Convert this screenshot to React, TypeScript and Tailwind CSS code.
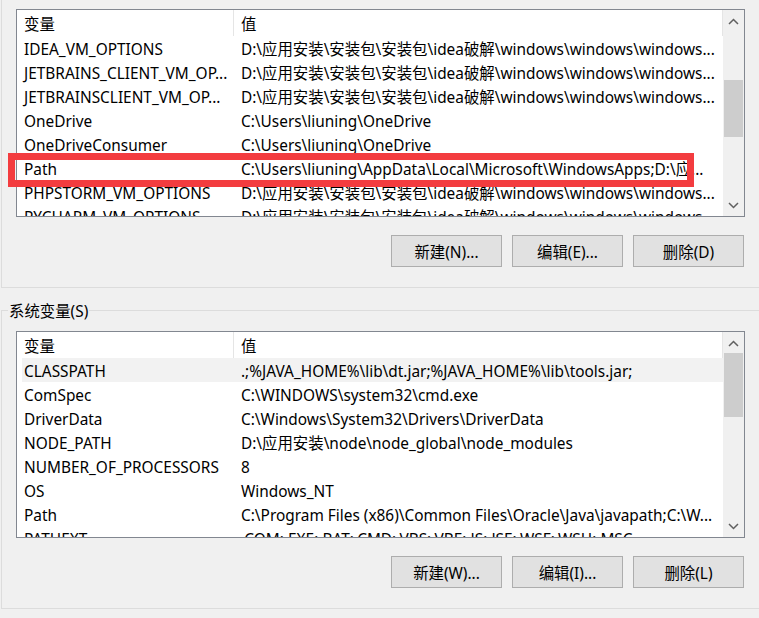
import React from 'react';

type Row = { name: string; value: string };

const userRows: Row[] = [
  { name: 'IDEA_VM_OPTIONS', value: 'D:\\应用安装\\安装包\\安装包\\idea破解\\windows\\windows\\windows...' },
  { name: 'JETBRAINS_CLIENT_VM_OP...', value: 'D:\\应用安装\\安装包\\安装包\\idea破解\\windows\\windows\\windows...' },
  { name: 'JETBRAINSCLIENT_VM_OP...', value: 'D:\\应用安装\\安装包\\安装包\\idea破解\\windows\\windows\\windows...' },
  { name: 'OneDrive', value: 'C:\\Users\\liuning\\OneDrive' },
  { name: 'OneDriveConsumer', value: 'C:\\Users\\liuning\\OneDrive' },
  { name: 'Path', value: 'C:\\Users\\liuning\\AppData\\Local\\Microsoft\\WindowsApps;D:\\应...' },
  { name: 'PHPSTORM_VM_OPTIONS', value: 'D:\\应用安装\\安装包\\安装包\\idea破解\\windows\\windows\\windows...' },
  { name: 'PYCHARM_VM_OPTIONS', value: 'D:\\应用安装\\安装包\\安装包\\idea破解\\windows\\windows\\windows...' },
];

const systemRows: Row[] = [
  { name: 'CLASSPATH', value: '.;%JAVA_HOME%\\lib\\dt.jar;%JAVA_HOME%\\lib\\tools.jar;' },
  { name: 'ComSpec', value: 'C:\\WINDOWS\\system32\\cmd.exe' },
  { name: 'DriverData', value: 'C:\\Windows\\System32\\Drivers\\DriverData' },
  { name: 'NODE_PATH', value: 'D:\\应用安装\\node\\node_global\\node_modules' },
  { name: 'NUMBER_OF_PROCESSORS', value: '8' },
  { name: 'OS', value: 'Windows_NT' },
  { name: 'Path', value: 'C:\\Program Files (x86)\\Common Files\\Oracle\\Java\\javapath;C:\\W...' },
  { name: 'PATHEXT', value: '.COM;.EXE;.BAT;.CMD;.VBS;.VBE;.JS;.JSE;.WSF;.WSH;.MSC' },
];

const Chevron = ({ up }: { up?: boolean }) => (
  <svg width="11" height="7" viewBox="0 0 11 7" className="block">
    <polyline
      points={up ? '1,6 5.5,1.5 10,6' : '1,1 5.5,5.5 10,1'}
      fill="none"
      stroke="#606060"
      strokeWidth="1.5"
    />
  </svg>
);

const ListView = ({ rows, thumbOffset, thumbHeight, selected, height }: {
  rows: Row[];
  thumbOffset: number;
  thumbHeight: number;
  selected?: number;
  height: string;
}) => (
  <div className={`flex w-[729px] ${height} border border-[#828790] bg-white`}>
    <div className="flex-1 overflow-hidden">
      <div className="flex h-[26px] items-center">
        <div className="flex h-full w-[217px] items-center border-r border-[#e5e5e5] pl-[7px] pt-[4px]">变量</div>
        <div className="flex h-full flex-1 items-center border-r border-[#e5e5e5] pl-[7px] pt-[4px]">值</div>
      </div>
      {rows.map((r, i) => (
        <div
          key={r.name + i}
          className={`ml-[5px] flex h-[24px] items-center whitespace-nowrap pt-[4px] ${selected === i ? 'bg-[#f2f2f2]' : ''}`}
        >
          <div className="w-[212px] overflow-hidden pl-[2px]">{r.name}</div>
          <div className="flex-1 overflow-hidden pl-[7px]">{r.value}</div>
        </div>
      ))}
    </div>
    <div className="flex w-[21px] flex-col bg-[#f0f0f0]">
      <div className="flex h-[21px] items-center justify-center pt-[2px]">
        <Chevron up />
      </div>
      <div className="flex-1 px-[1px]">
        <div className="w-full bg-[#cdcdcd]" style={{ marginTop: thumbOffset, height: thumbHeight }} />
      </div>
      <div className="flex h-[21px] items-center justify-center">
        <Chevron />
      </div>
    </div>
  </div>
);

const Buttons = ({ labels }: { labels: string[] }) => (
  <div className="flex w-[729px] justify-end gap-[10px] pr-[1px]">
    {labels.map((l) => (
      <button
        key={l}
        className="h-[32px] w-[111px] border border-[#adadad] bg-[#e1e1e1] pt-[3px] text-black"
      >
        {l}
      </button>
    ))}
  </div>
);

export default function App() {
  return (
    <div className="relative h-[618px] w-[759px] overflow-hidden bg-[#f0f0f0] font-[family-name:'Noto_Sans','Noto_Sans_CJK_SC',sans-serif] text-[15.4px] text-black">
      <div className="ml-[1px] w-[800px] border-b border-l border-[#dcdcdc] pb-[20px] pl-[14px] pt-[9px]">
        <ListView rows={userRows} thumbOffset={49} thumbHeight={57} height="h-[208px]" />
        <div className="mt-[18px]">
          <Buttons labels={['新建(N)...', '编辑(E)...', '删除(D)']} />
        </div>
      </div>

      <fieldset className="ml-[1px] mt-[12px] w-[800px] border border-r-0 border-[#dcdcdc] p-0">
        <legend className="ml-[6px] px-[1px] pt-[2px] leading-[19px]">系统变量(S)</legend>
        <div className="pb-[20px] pl-[14px] pt-[10px]">
          <ListView rows={systemRows} thumbOffset={0} thumbHeight={64} selected={0} height="h-[207px]" />
          <div className="mt-[18px]">
            <Buttons labels={['新建(W)...', '编辑(I)...', '删除(L)']} />
          </div>
        </div>
      </fieldset>

      <div className="absolute left-[8px] top-[153px] h-[34px] w-[686px] border-[7px] border-[#f33c3f]" />
    </div>
  );
}
